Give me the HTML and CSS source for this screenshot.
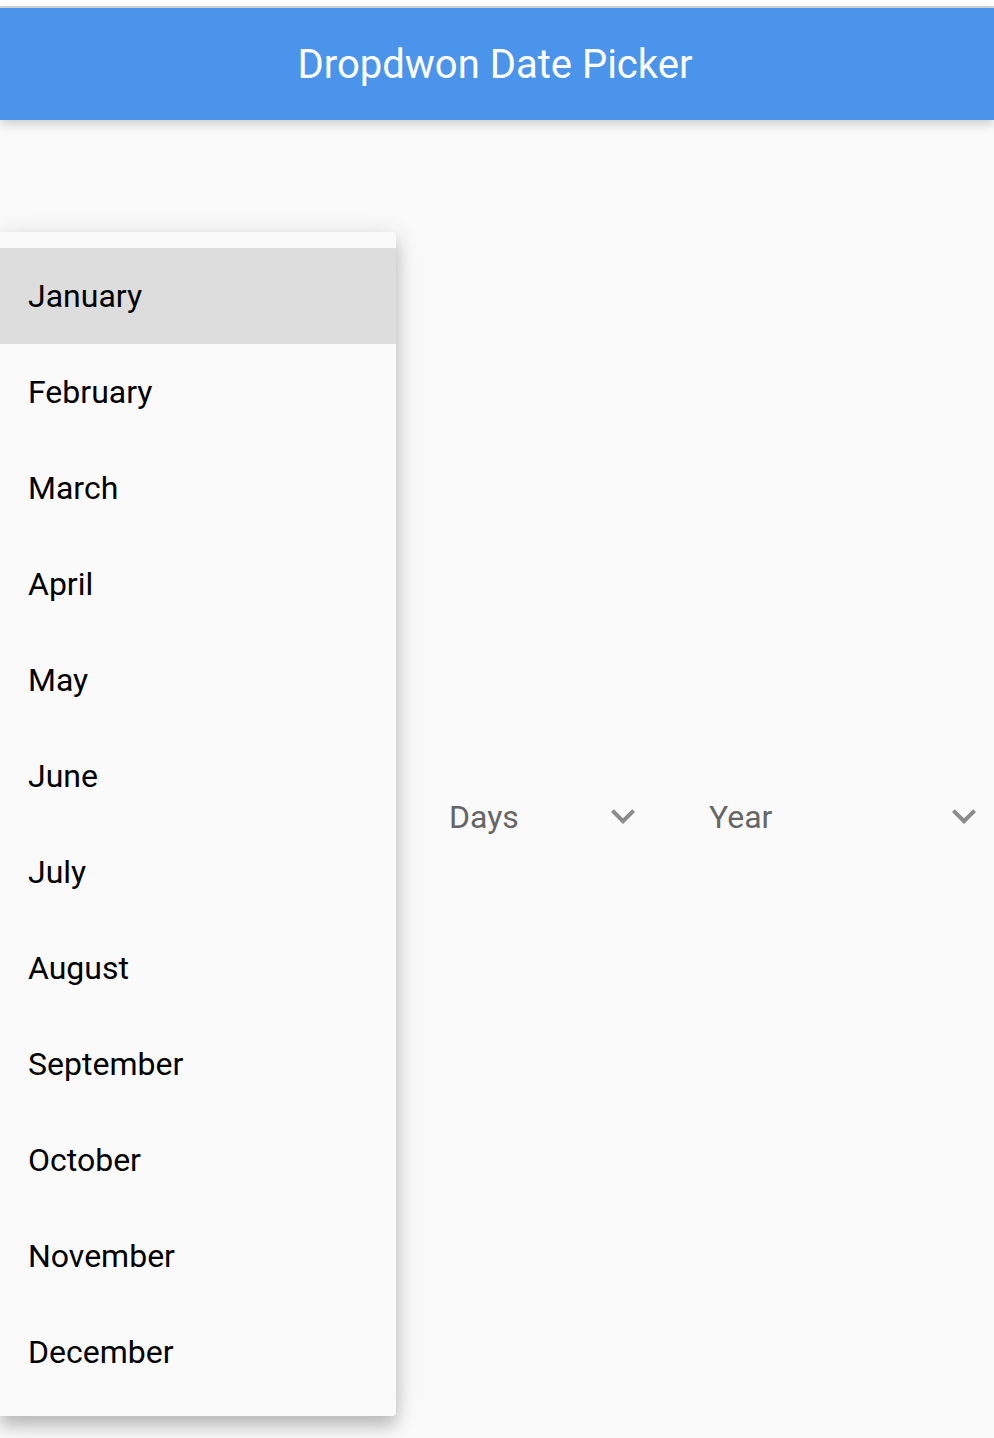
FILE: index.html
```html
<!DOCTYPE html>
<html lang="en">
<head>
	<meta charset="UTF-8">
	<meta name="viewport" content="width=device-width, initial-scale=1.0">
	<title>Dropdwon Date Picker</title>
	<link rel="stylesheet" href="styles.css">
</head>
<body>
	<div class="status"></div>
	<header class="app-bar">Dropdwon Date Picker</header>

	<main class="content">
		<div class="pickers">
			<div class="dropdown month">
				<span class="label">Month</span>
				<svg class="chevron" viewBox="0 0 24 24"><path d="M7.41 8.59L12 13.17l4.59-4.58L18 10l-6 6-6-6 1.41-1.41z"/></svg>
			</div>
			<div class="dropdown days">
				<span class="label">Days</span>
				<svg class="chevron" viewBox="0 0 24 24"><path d="M7.41 8.59L12 13.17l4.59-4.58L18 10l-6 6-6-6 1.41-1.41z"/></svg>
			</div>
			<div class="dropdown year">
				<span class="label">Year</span>
				<svg class="chevron" viewBox="0 0 24 24"><path d="M7.41 8.59L12 13.17l4.59-4.58L18 10l-6 6-6-6 1.41-1.41z"/></svg>
			</div>
		</div>

		<!-- open month menu -->
		<ul class="menu">
			<li class="item selected">January</li>
			<li class="item">February</li>
			<li class="item">March</li>
			<li class="item">April</li>
			<li class="item">May</li>
			<li class="item">June</li>
			<li class="item">July</li>
			<li class="item">August</li>
			<li class="item">September</li>
			<li class="item">October</li>
			<li class="item">November</li>
			<li class="item">December</li>
		</ul>
	</main>
</body>
</html>
```

FILE: styles.css
```css
html, body {
	margin: 0;
	height: 100%;
}

body {
	background-color: #fafafa;
	font-family: Roboto, "Liberation Sans", sans-serif;
	overflow: hidden;
}

.status {
	height: 6px;
	background-color: #fff;
	border-bottom: 2px solid #d6d6d6;
}

.app-bar {
	position: relative;
	z-index: 2;
	height: 112px;
	padding-right: 4px;
	background-color: #4a94ec;
	color: #fff;
	font-size: 40px;
	display: flex;
	align-items: center;
	justify-content: center;
	box-shadow: 0 4px 10px rgba(0, 0, 0, 0.18);
}

.content {
	position: relative;
	height: calc(100% - 120px);
}

.pickers {
	display: flex;
	align-items: center;
	padding-top: 672px;
}

.dropdown {
	display: flex;
	align-items: center;
	height: 48px;
	font-size: 32px;
	color: #666;
}

.dropdown .label {
	flex: 1;
	padding-top: 1px;
}

.chevron {
	width: 48px;
	height: 48px;
	fill: #8c8c8c;
}

.month {
	width: 199px;
	margin-left: 188px;
	margin-right: 62px;
}

.days {
	width: 198px;
	margin-right: 62px;
}

.year {
	width: 279px;
}

.menu {
	position: absolute;
	top: 112px;
	left: 0;
	width: 396px;
	margin: 0;
	padding: 16px 0;
	list-style: none;
	background-color: #fafafa;
	border-radius: 0 4px 4px 0;
	box-shadow: 0 10px 16px rgba(0, 0, 0, 0.2), 0 4px 30px rgba(0, 0, 0, 0.12);
}

.item {
	height: 96px;
	padding-left: 28px;
	display: flex;
	align-items: center;
	font-size: 32px;
	color: #000;
}

.item.selected {
	background-color: #dddddd;
}
```
